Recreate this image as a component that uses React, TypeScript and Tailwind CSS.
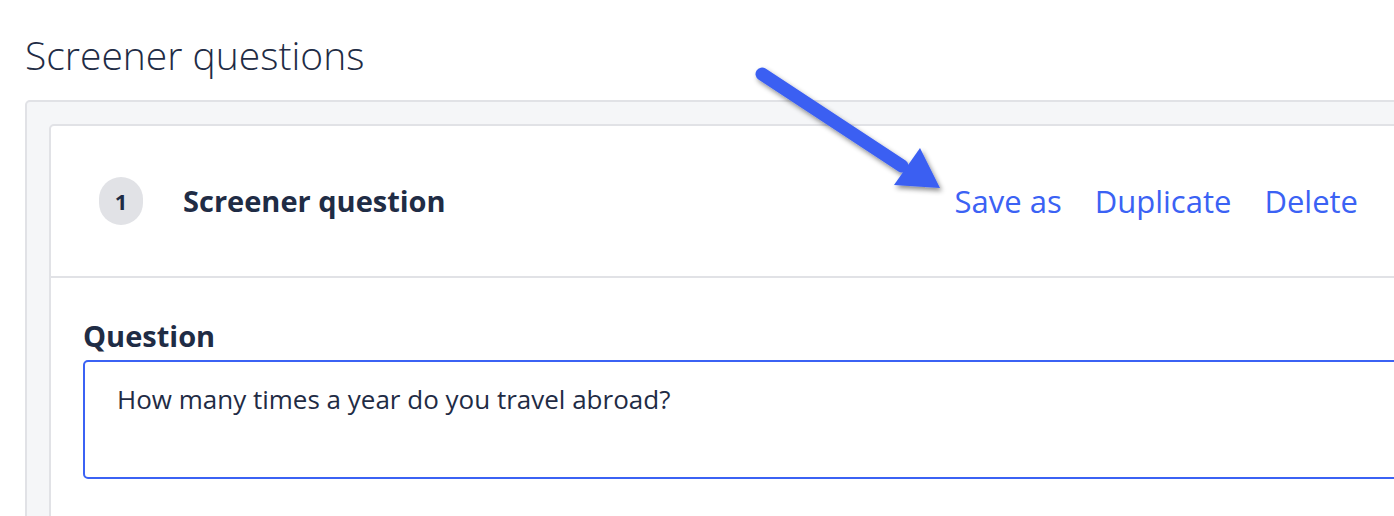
import React from "react";

function Arrow() {
  return (
    <svg
      className="absolute left-0 top-0 pointer-events-none"
      width="1394"
      height="516"
      viewBox="0 0 1394 516"
    >
      <defs>
        <filter id="shadow" x="-20%" y="-20%" width="140%" height="140%">
          <feDropShadow dx="2" dy="3" stdDeviation="2.5" floodColor="#000" floodOpacity="0.45" />
        </filter>
      </defs>
      <g filter="url(#shadow)">
        <line x1="762" y1="74" x2="902" y2="166" stroke="#3b5ff2" strokeWidth="13" strokeLinecap="round" />
        <polygon points="920,148 940,188 894,185" fill="#3b5ff2" />
      </g>
    </svg>
  );
}

export default function App() {
  return (
    <div className="relative w-[1394px] h-[516px] overflow-hidden bg-white font-['Open_Sans',sans-serif] text-[#1f2c45]">
      <h1 className="pl-[25px] pt-[33px] text-[39px] leading-[44px] font-light">
        Screener questions
      </h1>

      {/* outer panel */}
      <div className="mt-[23px] ml-[25px] w-[1420px] h-[430px] rounded-[5px] border-2 border-[#e1e2e6] bg-[#f5f6f8] pl-[22px] pt-[22px]">
        {/* card */}
        <div className="h-full rounded-[5px] border-2 border-[#e1e2e6] bg-white">
          <div className="flex h-[152px] items-center border-b-2 border-[#e1e2e6] pl-[48px] pr-[83px]">
            <div className="flex h-[48px] w-[44px] items-center justify-center rounded-full bg-[#e1e2e6] text-[22px] font-bold">
              1
            </div>
            <div className="ml-[40px] text-[29px] font-bold">Screener question</div>
            <div className="ml-auto flex gap-[33px] text-[31px] text-[#3b62f4]">
              <span>Save as</span>
              <span>Duplicate</span>
              <span>Delete</span>
            </div>
          </div>

          <div className="pl-[32px] pt-[38px]">
            <div className="text-[29px] font-bold leading-[40px]">Question</div>
            <div className="mt-[4px] h-[119px] rounded-[5px] border-2 border-[#3b62f4] px-[32px] pt-[19px] text-[26px] leading-[36px]">
              How many times a year do you travel abroad?
            </div>
          </div>
        </div>
      </div>

      <Arrow />
    </div>
  );
}
